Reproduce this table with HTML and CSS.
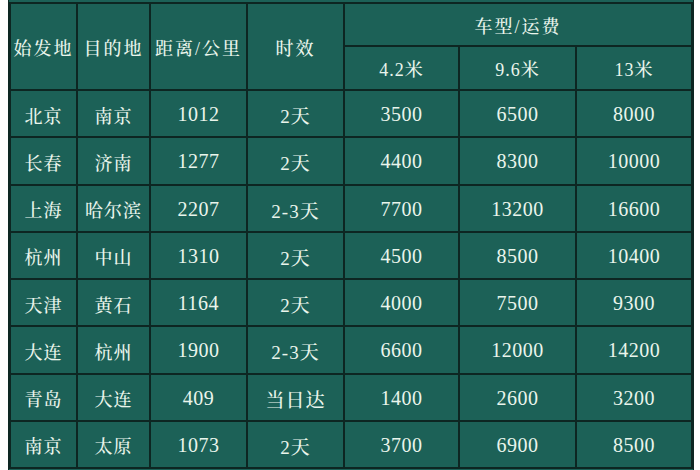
FILE: index.html
```html
<!DOCTYPE html>
<html lang="zh-CN">
<head>
<meta charset="utf-8">
<title>运费表</title>
<link rel="stylesheet" href="styles.css">
</head>
<body>
<div class="sheet">
<table class="rates">
<colgroup>
<col class="c1"><col class="c2"><col class="c3"><col class="c4"><col class="c5"><col class="c6"><col class="c7">
</colgroup>
<thead>
<tr class="h1">
<th rowspan="2">始发地</th>
<th rowspan="2">目的地</th>
<th rowspan="2">距离/公里</th>
<th rowspan="2">时效</th>
<th colspan="3">车型/运费</th>
</tr>
<tr class="h2">
<th class="sub">4.2米</th>
<th class="sub">9.6米</th>
<th class="sub">13米</th>
</tr>
</thead>
<tbody>
<tr><td>北京</td><td>南京</td><td>1012</td><td>2天</td><td>3500</td><td>6500</td><td>8000</td></tr>
<tr><td>长春</td><td>济南</td><td>1277</td><td>2天</td><td>4400</td><td>8300</td><td>10000</td></tr>
<tr><td>上海</td><td>哈尔滨</td><td>2207</td><td>2-3天</td><td>7700</td><td>13200</td><td>16600</td></tr>
<tr><td>杭州</td><td>中山</td><td>1310</td><td>2天</td><td>4500</td><td>8500</td><td>10400</td></tr>
<tr><td>天津</td><td>黄石</td><td>1164</td><td>2天</td><td>4000</td><td>7500</td><td>9300</td></tr>
<tr><td>大连</td><td>杭州</td><td>1900</td><td>2-3天</td><td>6600</td><td>12000</td><td>14200</td></tr>
<tr><td>青岛</td><td>大连</td><td>409</td><td>当日达</td><td>1400</td><td>2600</td><td>3200</td></tr>
<tr><td>南京</td><td>太原</td><td>1073</td><td>2天</td><td>3700</td><td>6900</td><td>8500</td></tr>
</tbody>
</table>
</div>
</body>
</html>
```
FILE: styles.css
```css
html, body {
  margin: 0;
  padding: 0;
  background: #ffffff;
  width: 700px;
  height: 470px;
  overflow: hidden;
}

body {
  padding-left: 8px;
  font-family: "Liberation Serif", "Noto Serif CJK SC", "Noto Sans CJK SC", serif;
  color: #eaf5ec;
}

.sheet {
  display: inline-block;
  background: #1c6157;
  padding: 2px 0 4px;
  border-left: 1px solid #0d2622;
  border-right: 1px solid #0d2622;
}

.rates {
  border-collapse: collapse;
  table-layout: fixed;
  width: 682px;
  background: #1c6157;
}

.c1 { width: 67px; }
.c2 { width: 73px; }
.c3 { width: 97px; }
.c4 { width: 97px; }
.c5 { width: 115px; }
.c6 { width: 117px; }
.c7 { width: 116px; }

.rates th,
.rates td {
  border: 2px solid #0d2622;
  padding: 0;
  text-align: center;
  vertical-align: middle;
  font-weight: 500;
  font-size: 18px;
  letter-spacing: 1px;
  white-space: nowrap;
}

.rates th {
  letter-spacing: 2px;
}

.rates th.sub {
  font-size: 18px;
  letter-spacing: 1px;
}

.rates td:nth-child(3),
.rates td:nth-child(n+5) {
  font-size: 20px;
  letter-spacing: 0.5px;
}

.rates td:nth-child(4) {
  font-size: 19px;
}

.h1 { height: 43px; }
.h2 { height: 44px; }

.rates tbody tr { height: 47.25px; }
.rates tbody td { padding-top: 2px; }
```
